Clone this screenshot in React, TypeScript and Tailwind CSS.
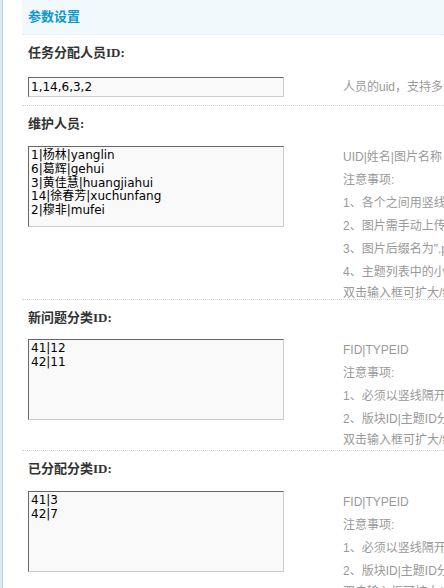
import React from 'react';

const labelFont = "font-['Liberation_Serif','Noto_Sans_CJK_SC',serif]";
const hintFont = "font-['Liberation_Sans','Noto_Sans_CJK_SC',sans-serif]";
const boxFont = "font-['DejaVu_Sans','Noto_Sans_CJK_SC',sans-serif]";

const boxClass = `block w-[256px] bg-[#f9f9f9] border border-t-[#666] border-l-[#666] border-r-[#ccc] border-b-[#ccc] px-[2px] text-[12px] text-black ${boxFont} outline-none`;

function Label({ text }: { text: string }) {
  return (
    <div className={`h-[36px] flex items-center px-[6px] text-[13px] font-bold text-[#333] ${labelFont}`}>{text}</div>
  );
}

function Hints({ lines }: { lines: string[] }) {
  const last = lines[lines.length - 1];
  return (
    <div className={`ml-[59px] text-[12px] text-[#999] whitespace-nowrap ${hintFont}`}>
      {lines.slice(0, -1).map((l) => (
        <div key={l} className="leading-[23px]">{l}</div>
      ))}
      <div className="leading-[18px]">{last}</div>
    </div>
  );
}

function AreaSection({ label, value, hints, height, pt }: { label: string; value: string; hints: string[]; height: string; pt: string }) {
  return (
    <div className={`${height} border-b border-dotted border-[#d4d4d4]`}>
      <Label text={label} />
      <div className={`flex items-start px-[6px] ${pt}`}>
        <textarea
          readOnly
          value={value}
          className={`${boxClass} h-[81px] py-[2px] leading-[13.75px] resize-none shrink-0`}
        />
        <Hints lines={hints} />
      </div>
    </div>
  );
}

export default function App() {
  return (
    <div className="flex min-h-screen h-[588px] overflow-hidden bg-white">
      <div className="w-[3px] shrink-0 bg-[#dce8f3] border-r border-[#b7cde2]" />
      <div className="ml-[19px] flex-1 overflow-hidden">
        <div className="h-[35px] bg-[#f2f9fd] border-b border-dotted border-[#deeffb] flex items-center px-[6px]">
          <span className={`text-[13px] font-bold text-[#0a97c9] ${labelFont}`}>参数设置</span>
        </div>

        <div className="h-[71px] border-b border-dotted border-[#d4d4d4]">
          <div className={`h-[35px] flex items-center px-[6px] text-[13px] font-bold text-[#333] ${labelFont}`}>任务分配人员ID:</div>
          <div className="flex items-center px-[6px] pt-[7px]">
            <input
              readOnly
              value="1,14,6,3,2"
              className={`${boxClass} h-[20px] leading-[18px] shrink-0`}
            />
            <div className={`ml-[59px] text-[12px] text-[#999] whitespace-nowrap ${hintFont}`}>人员的uid，支持多个，用英文逗号隔开</div>
          </div>
        </div>

        <AreaSection
          label="维护人员:"
          value={'1|杨林|yanglin\n6|葛辉|gehui\n3|黄佳慧|huangjiahui\n14|徐春芳|xuchunfang\n2|穆非|mufei'}
          hints={[
            'UID|姓名|图片名称',
            '注意事项:',
            '1、各个之间用竖线隔开，每行一个',
            '2、图片需手动上传到插件目录下',
            '3、图片后缀名为".png"',
            '4、主题列表中的小图标显示',
            '双击输入框可扩大/缩小',
          ]}
          height="h-[194px]"
          pt="pt-[4px]"
        />

        <AreaSection
          label="新问题分类ID:"
          value={'41|12\n42|11'}
          hints={['FID|TYPEID', '注意事项:', '1、必须以竖线隔开，每行一个', '2、版块ID|主题ID分类', '双击输入框可扩大/缩小']}
          height="h-[151px]"
          pt="pt-[3px]"
        />

        <AreaSection
          label="已分配分类ID:"
          value={'41|3\n42|7'}
          hints={['FID|TYPEID', '注意事项:', '1、必须以竖线隔开，每行一个', '2、版块ID|主题ID分类', '双击输入框可扩大/缩小']}
          height="h-[160px]"
          pt="pt-[4px]"
        />
      </div>
    </div>
  );
}
